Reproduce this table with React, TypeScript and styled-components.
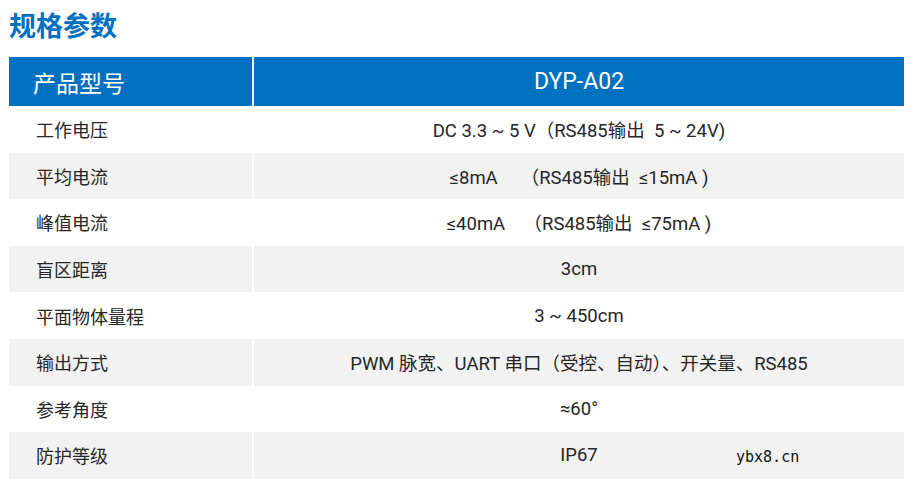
import styled, { createGlobalStyle } from 'styled-components'

const GlobalStyle = createGlobalStyle`
  body {
    margin: 0;
    background: #fff;
    font-family: Roboto, "Noto Sans CJK SC", sans-serif;
  }
`

const BLUE = '#0070c0'

const Page = styled.div`
  position: relative;
  width: 914px;
  height: 486px;
  padding: 8px 10px 0 9px;
  box-sizing: border-box;
`

const Title = styled.h2`
  margin: 0;
  height: 49px;
  font-family: "Noto Sans CJK SC", sans-serif;
  font-size: 27px;
  line-height: 34px;
  font-weight: 700;
  color: ${BLUE};
`

const Table = styled.div`
  display: grid;
  grid-template-columns: 243px 1fr;
  grid-template-rows: 49px;
  grid-auto-rows: 46.6px;
  column-gap: 2px;
`

const Cell = styled.div<{ $head?: boolean; $shade?: boolean; $label?: boolean }>`
  display: flex;
  align-items: center;
  justify-content: ${p => (p.$label ? 'flex-start' : 'center')};
  padding-left: ${p => (p.$label ? (p.$head ? '24px' : '27px') : '0')};
  background: ${p => (p.$head ? BLUE : p.$shade ? '#f2f2f2' : '#fff')};
  color: ${p => (p.$head ? '#fff' : '#262626')};
  font-size: ${p => (p.$head ? '23px' : '18.5px')};
  font-family: ${p => (p.$label ? '"Noto Sans CJK SC", sans-serif' : 'inherit')};
  white-space: pre;
`

const Label = styled.span`
  font-size: 18px;
`

const Watermark = styled.span`
  position: absolute;
  left: 736px;
  top: 448px;
  font-family: "DejaVu Sans Mono", "Liberation Mono", monospace;
  font-size: 15px;
  color: #111;
`

const rows: [string, string][] = [
  ['工作电压', 'DC 3.3 ~ 5 V（RS485输出  5 ~ 24V)'],
  ['平均电流', '≤8mA     （RS485输出  ≤15mA )'],
  ['峰值电流', '≤40mA    （RS485输出  ≤75mA )'],
  ['盲区距离', '3cm'],
  ['平面物体量程', '3 ~ 450cm'],
  ['输出方式', 'PWM 脉宽、UART 串口（受控、自动）、开关量、RS485'],
  ['参考角度', '≈60°'],
  ['防护等级', 'IP67'],
]

export default function App() {
  return (
    <Page>
      <GlobalStyle />
      <Title>规格参数</Title>
      <Table>
        <Cell $head $label>产品型号</Cell>
        <Cell $head>DYP-A02</Cell>
        {rows.map(([k, v], idx) => [
          <Cell key={'k' + idx} $label $shade={idx % 2 === 1}><Label>{k}</Label></Cell>,
          <Cell key={'v' + idx} $shade={idx % 2 === 1}>{v}</Cell>,
        ])}
      </Table>
      <Watermark>ybx8.cn</Watermark>
    </Page>
  )
}
